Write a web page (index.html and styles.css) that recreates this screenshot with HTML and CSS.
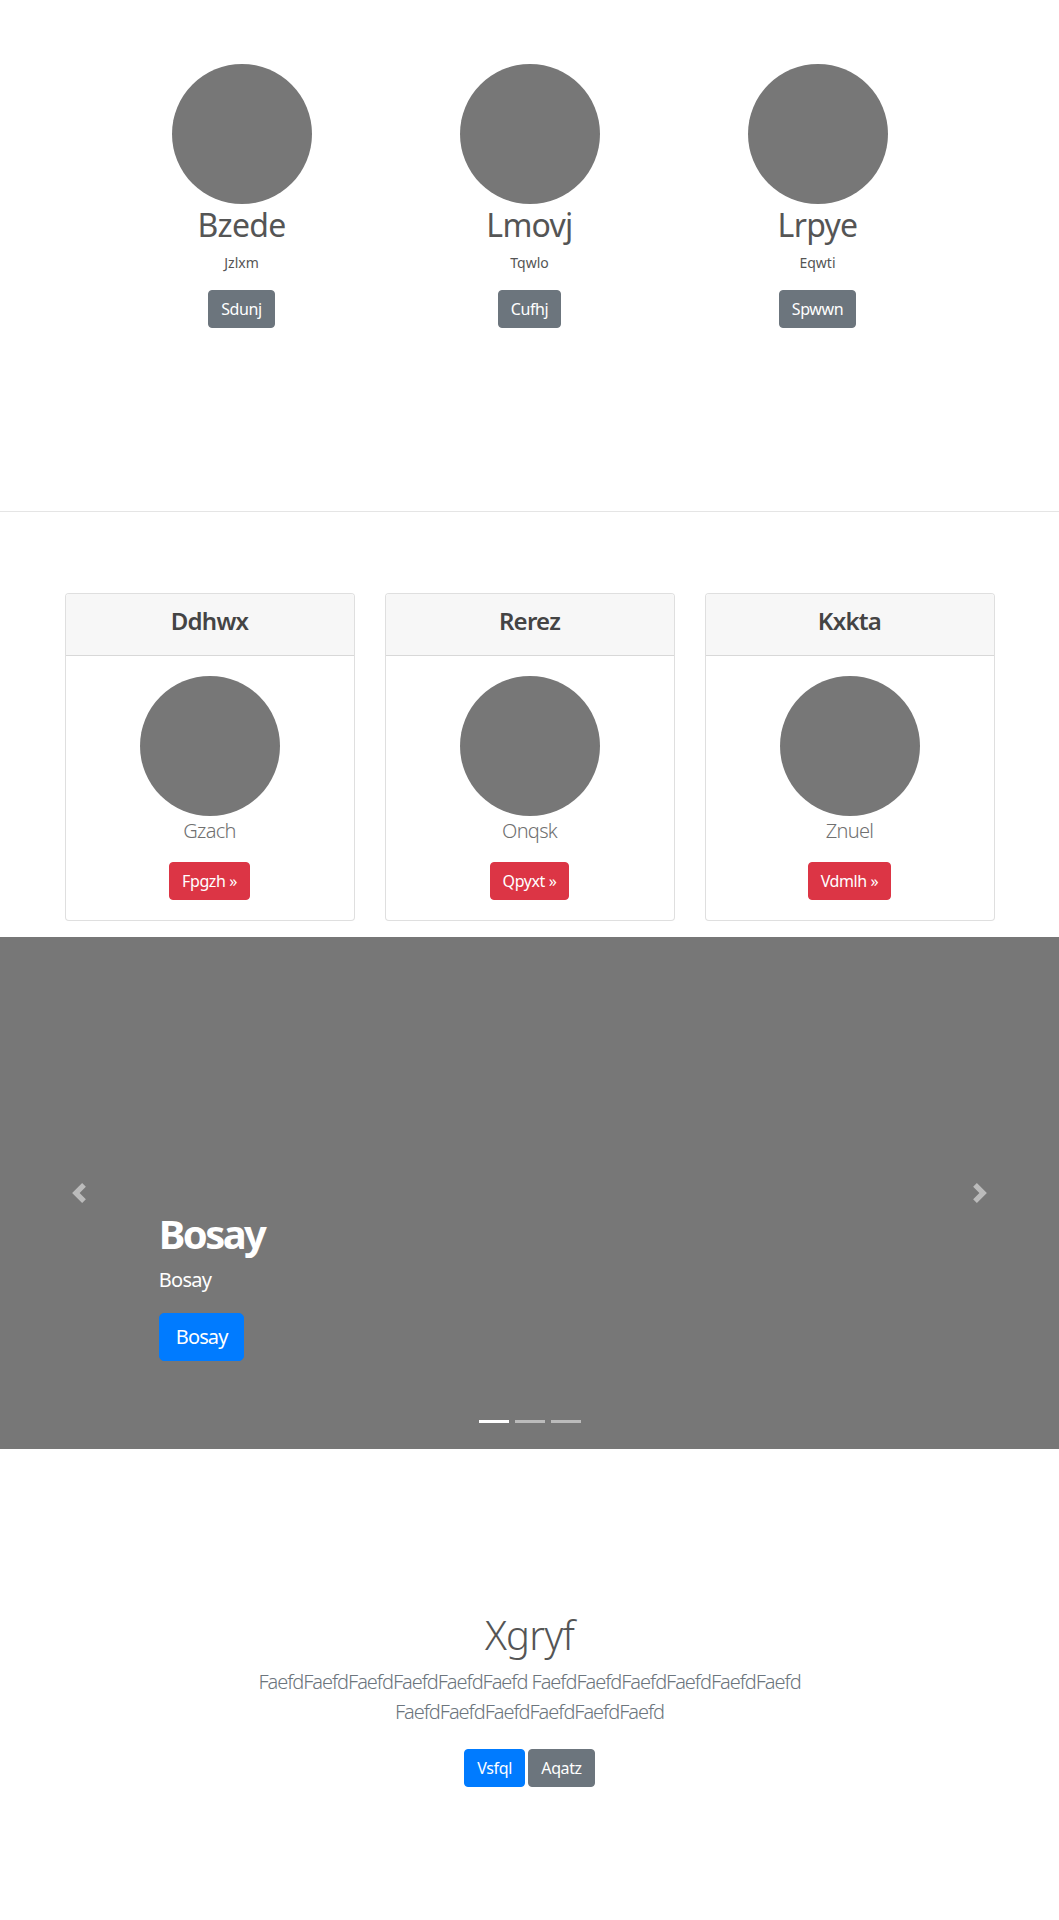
FILE: index.html
```html
<!DOCTYPE html>
<html lang="en">
<head>
<meta charset="utf-8">
<title>Page</title>
<link rel="stylesheet" href="styles.css">
</head>
<body>
<section class="marketing">
  <div class="feature-row">
    <div class="feature">
      <div class="avatar"></div>
      <h2 class="feature-title">Bzede</h2>
      <p class="feature-text">Jzlxm</p>
      <a class="btn btn-secondary feature-btn" href="#">Sdunj</a>
    </div>
    <div class="feature">
      <div class="avatar"></div>
      <h2 class="feature-title">Lmovj</h2>
      <p class="feature-text">Tqwlo</p>
      <a class="btn btn-secondary feature-btn" href="#">Cufhj</a>
    </div>
    <div class="feature">
      <div class="avatar"></div>
      <h2 class="feature-title">Lrpye</h2>
      <p class="feature-text">Eqwti</p>
      <a class="btn btn-secondary feature-btn" href="#">Spwwn</a>
    </div>
  </div>
</section>

<hr class="divider">

<section class="pricing">
  <div class="card-deck">
    <div class="card">
      <div class="card-header"><h4 class="card-title">Ddhwx</h4></div>
      <div class="card-body">
        <div class="avatar"></div>
        <p class="card-lead">Gzach</p>
        <a class="btn btn-danger" href="#">Fpgzh &raquo;</a>
      </div>
    </div>
    <div class="card">
      <div class="card-header"><h4 class="card-title">Rerez</h4></div>
      <div class="card-body">
        <div class="avatar"></div>
        <p class="card-lead">Onqsk</p>
        <a class="btn btn-danger" href="#">Qpyxt &raquo;</a>
      </div>
    </div>
    <div class="card">
      <div class="card-header"><h4 class="card-title">Kxkta</h4></div>
      <div class="card-body">
        <div class="avatar"></div>
        <p class="card-lead">Znuel</p>
        <a class="btn btn-danger" href="#">Vdmlh &raquo;</a>
      </div>
    </div>
  </div>
</section>

<div class="carousel">
  <a class="carousel-control control-prev" href="#" aria-label="Previous">
    <svg width="20" height="20" viewBox="0 0 8 8"><path fill="#fff" d="M5.25 0l-4 4 4 4 1.5-1.5-2.5-2.5 2.5-2.5-1.5-1.5z"/></svg>
  </a>
  <a class="carousel-control control-next" href="#" aria-label="Next">
    <svg width="20" height="20" viewBox="0 0 8 8"><path fill="#fff" d="M2.75 0l-1.5 1.5 2.5 2.5-2.5 2.5 1.5 1.5 4-4-4-4z"/></svg>
  </a>
  <div class="carousel-caption">
    <h1 class="caption-title">Bosay</h1>
    <p class="caption-text">Bosay</p>
    <a class="btn btn-lg btn-primary" href="#">Bosay</a>
  </div>
  <div class="carousel-indicators">
    <span class="indicator active"></span>
    <span class="indicator"></span>
    <span class="indicator"></span>
  </div>
</div>

<section class="jumbotron">
  <div class="jumbo-inner">
    <h1 class="jumbo-title">Xgryf</h1>
    <p class="jumbo-lead">FaefdFaefdFaefdFaefdFaefdFaefd FaefdFaefdFaefdFaefdFaefdFaefd FaefdFaefdFaefdFaefdFaefdFaefd</p>
    <p class="jumbo-actions">
      <a class="btn btn-primary jumbo-btn" href="#">Vsfql</a>
      <a class="btn btn-secondary jumbo-btn" href="#">Aqatz</a>
    </p>
  </div>
</section>
</body>
</html>
```
FILE: styles.css
```css
* {
  box-sizing: border-box;
}

html,
body {
  margin: 0;
  padding: 0;
}

body {
  font-family: "Noto Sans", "Open Sans", sans-serif;
  font-size: 16px;
  line-height: 1.5;
  letter-spacing: -0.045em;
  color: #555;
  background: #fff;
}

/* Buttons */
.btn {
  display: inline-block;
  padding: 6px 12px;
  font-size: 16px;
  line-height: 24px;
  font-weight: 400;
  letter-spacing: -0.025em;
  color: #fff;
  text-decoration: none;
  border: 1px solid transparent;
  border-radius: 4px;
  white-space: nowrap;
}

.btn-secondary {
  background: #6c757d;
  border-color: #6c757d;
}

.btn-danger {
  background: #dc3545;
  border-color: #dc3545;
}

.btn-primary {
  background: #007bff;
  border-color: #007bff;
}

.btn-lg {
  padding: 8px 16px;
  font-size: 20px;
  line-height: 30px;
  letter-spacing: -0.045em;
  border-radius: 5px;
}

.avatar {
  width: 140px;
  height: 140px;
  border-radius: 50%;
  background: #777;
  flex: none;
}

/* Marketing */
.marketing {
  padding-top: 64px;
  padding-bottom: 103px;
}

.feature-row {
  display: grid;
  grid-template-columns: repeat(3, 288px);
  justify-content: center;
}

.feature {
  display: flex;
  flex-direction: column;
  align-items: center;
}

.feature-title {
  margin: 2px 0 0;
  font-size: 32px;
  font-weight: 400;
  line-height: 38px;
  color: #555;
}

.feature-text {
  margin: 8px 0 0;
  font-size: 14px;
  line-height: 21px;
  letter-spacing: 0;
  color: #555;
}

.feature-btn {
  margin-top: 17px;
}

.divider {
  border: 0;
  border-top: 1px solid rgba(0, 0, 0, 0.1);
  margin: 80px 0 81px;
  height: 0;
}

/* Pricing cards */
.pricing {
  padding-bottom: 16px;
}

.card-deck {
  width: 930px;
  margin: 0 auto;
  display: grid;
  grid-template-columns: repeat(3, 1fr);
  gap: 30px;
}

.card {
  border: 1px solid rgba(0, 0, 0, 0.125);
  border-radius: 4px;
  overflow: hidden;
  text-align: center;
  background: #fff;
}

.card-header {
  background: #f7f7f7;
  border-bottom: 1px solid rgba(0, 0, 0, 0.125);
  padding: 12px 20px;
}

.card-title {
  margin: 0 0 8px;
  font-size: 24px;
  font-weight: 600;
  line-height: 29px;
  color: #444;
}

.card-body {
  padding: 20px;
  display: flex;
  flex-direction: column;
  align-items: center;
}

.card-lead {
  margin: 0 0 16px;
  font-size: 20px;
  font-weight: 300;
  line-height: 30px;
  color: #707070;
}

/* Carousel */
.carousel {
  position: relative;
  height: 512px;
  background: #777;
  margin-bottom: 64px;
  overflow: hidden;
}

.carousel-control {
  position: absolute;
  top: 0;
  bottom: 0;
  width: 15%;
  display: flex;
  align-items: center;
  justify-content: center;
  opacity: 0.5;
}

.control-prev {
  left: 0;
}

.control-next {
  right: 0;
}

.carousel-caption {
  position: absolute;
  left: 15%;
  right: 15%;
  bottom: 88px;
  display: flex;
  flex-direction: column;
  align-items: flex-start;
  color: #fff;
}

.caption-title {
  margin: 0 0 7px;
  font-size: 40px;
  font-weight: 700;
  line-height: 48px;
  letter-spacing: -0.065em;
}

.caption-text {
  margin: 0 0 18px;
  font-size: 20px;
  line-height: 30px;
}

.carousel-indicators {
  position: absolute;
  left: 0;
  right: 0;
  bottom: 26px;
  display: flex;
  justify-content: center;
  gap: 6px;
}

.indicator {
  width: 30px;
  height: 3px;
  background: rgba(255, 255, 255, 0.5);
}

.indicator.active {
  background: #fff;
}

/* Jumbotron */
.jumbotron {
  padding: 98px 0 94px;
  text-align: center;
}

.jumbo-inner {
  max-width: 640px;
  margin: 0 auto;
  padding: 0 15px;
}

.jumbo-title {
  margin: 0 0 8px;
  font-size: 40px;
  font-weight: 300;
  line-height: 48px;
  color: #555;
}

.jumbo-lead {
  margin: 0 0 14px;
  font-size: 20px;
  font-weight: 300;
  line-height: 30px;
  letter-spacing: -0.052em;
  color: #6c757d;
}

.jumbo-actions {
  margin: 0 0 16px;
}

.jumbo-btn {
  margin: 8px 0;
}
```
